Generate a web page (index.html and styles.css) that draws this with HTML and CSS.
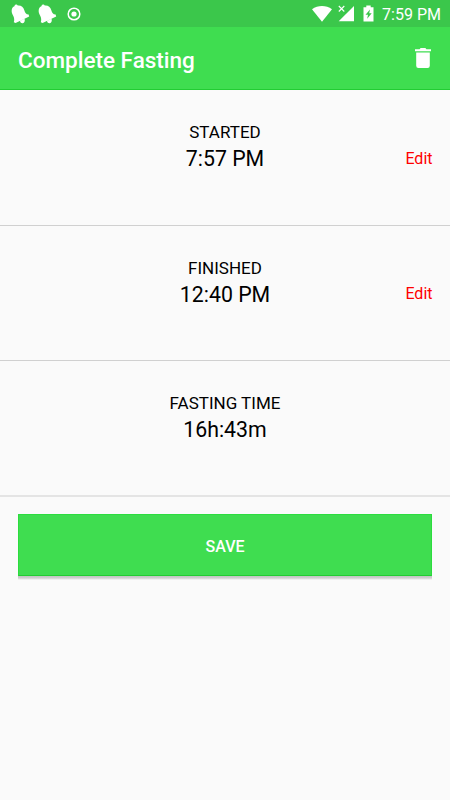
FILE: index.html
```html
<!DOCTYPE html>
<html lang="en">
<head>
    <meta charset="UTF-8">
    <meta name="viewport" content="width=device-width, initial-scale=1.0">
    <title>Complete Fasting</title>
    <link rel="stylesheet" href="styles.css">
</head>
<body>
    <div class="status-bar">
        <div class="notifications">
            <svg class="bell" viewBox="0 0 20 22"><path d="M.8 5.6 C1 4 2 2.6 3.4 2.2 L4 .8 L5.8 .6 L6.8 1.6 C10 1.2 12.4 3.2 13.4 6.4 C14 8.8 15 10 17.6 10.6 L18.2 12.6 L4.6 19 L2.8 18.2 C3.6 15.8 3.2 14 2.2 11.8 C.8 9.6 .4 7.6 .8 5.6Z M9 17 L13.6 14.8 C14.2 17.4 13.4 18.9 11.8 19.2 C10.4 19.4 9.4 18.6 9 17Z"/></svg>
            <svg class="bell" viewBox="0 0 20 22"><path d="M.8 5.6 C1 4 2 2.6 3.4 2.2 L4 .8 L5.8 .6 L6.8 1.6 C10 1.2 12.4 3.2 13.4 6.4 C14 8.8 15 10 17.6 10.6 L18.2 12.6 L4.6 19 L2.8 18.2 C3.6 15.8 3.2 14 2.2 11.8 C.8 9.6 .4 7.6 .8 5.6Z M9 17 L13.6 14.8 C14.2 17.4 13.4 18.9 11.8 19.2 C10.4 19.4 9.4 18.6 9 17Z"/></svg>
            <svg class="target" viewBox="0 0 14 14"><circle class="ring" cx="7" cy="7" r="5.8"/><circle cx="7" cy="7" r="2.6"/></svg>
        </div>
        <div class="system">
            <svg class="wifi" viewBox="0 0 20 16"><path d="M0 3.3 C6-1 14-1 20 3.3 L10 15.8Z"/></svg>
            <svg class="signal" viewBox="0 0 17 17"><path d="M16 1 V16.3 H.7Z"/><path class="gap" d="M0 0 H8 V8 H0Z"/><path class="cross" d="M.8 1 L6.3 6.5 M6.3 1 L.8 6.5"/></svg>
            <svg class="battery" viewBox="0 0 11 17"><path d="M3.3 .5 H7.7 V2.2 H10.5 V16.5 H.5 V2.2 H3.3Z"/><path class="bolt" d="M7 4.5 L2.5 9.8 H5 L4.2 13.8 L8.7 8.3 H6.2Z"/></svg>
            <span class="clock">7:59 PM</span>
        </div>
    </div>

    <header class="toolbar">
        <h1>Complete Fasting</h1>
        <svg class="trash" viewBox="0 0 16 20"><path d="M0 1.2 H4.6 L5.6 0 H10.4 L11.4 1.2 H16 V3.3 H0Z M1.2 4.6 H14.8 V17.8 Q14.8 20 12.6 20 H3.4 Q1.2 20 1.2 17.8Z"/></svg>
    </header>

    <main>
        <section class="entry">
            <div class="label">STARTED</div>
            <div class="value">7:57 PM</div>
            <a class="edit">Edit</a>
        </section>
        <section class="entry">
            <div class="label">FINISHED</div>
            <div class="value">12:40 PM</div>
            <a class="edit">Edit</a>
        </section>
        <section class="entry last">
            <div class="label">FASTING TIME</div>
            <div class="value">16h:43m</div>
        </section>
        <div class="actions">
            <button type="button" class="btn-save">SAVE</button>
        </div>
    </main>
</body>
</html>
```
FILE: styles.css
```css
body {
    margin: 0;
    font-family: Roboto, sans-serif;
    background-color: #fafafa;
    color: #000;
}
svg {
    display: block;
    fill: #fff;
}
.status-bar {
    display: flex;
    justify-content: space-between;
    height: 27px;
    box-sizing: border-box;
    padding: 0 9px 0 11px;
    background-color: #3bc74b;
}
.notifications,
.system {
    display: flex;
    align-items: center;
}
.bell {
    width: 20px;
    height: 22px;
    margin: 2px 7px 0 0;
}
.target {
    width: 14px;
    height: 14px;
    margin-left: 2px;
}
.target .ring {
    fill: none;
    stroke: #fff;
    stroke-width: 1.5;
}
.wifi {
    width: 20px;
    height: 16px;
    margin-right: 6px;
}
.signal {
    width: 17px;
    height: 17px;
    margin-right: 8px;
}
.signal .gap {
    fill: #3bc74b;
}
.signal .cross {
    fill: none;
    stroke: #fff;
    stroke-width: 1.1;
}
.battery {
    width: 11px;
    height: 17px;
    margin-right: 8px;
}
.battery .bolt {
    fill: #3bc74b;
}
.clock {
    color: #fff;
    font-size: 16px;
    line-height: 27px;
    padding-top: 1px;
}
.toolbar {
    display: flex;
    align-items: center;
    justify-content: space-between;
    height: 63px;
    box-sizing: border-box;
    padding: 0 19px 0 18px;
    background-color: #3fdd50;
    border-bottom: 1px solid #22cc33;
}
.toolbar h1 {
    margin: 3px 0 0;
    color: #fff;
    font-size: 22.5px;
    font-weight: 500;
    line-height: 28px;
}
.trash {
    width: 16px;
    height: 20px;
}
.entry {
    display: grid;
    grid-template-columns: 1fr auto 1fr;
    grid-template-rows: 20px 32px;
    align-items: center;
    height: 135.5px;
    box-sizing: border-box;
    padding: 32px 17.5px 0;
    border-bottom: 1px solid #d0d0d0;
}
.entry.last {
    border-bottom: 2px solid #e4e4e4;
}
.label {
    grid-column: 2;
    text-align: center;
    font-size: 17px;
    line-height: 20px;
}
.value {
    grid-column: 2;
    text-align: center;
    font-size: 21.3px;
    line-height: 32px;
    padding-top: 2px;
}
.edit {
    grid-column: 3;
    justify-self: end;
    color: #f00;
    font-size: 16px;
}
.actions {
    padding: 17.5px 18px 0;
}
.actions::after {
    content: "";
    display: block;
    height: 4px;
    background: linear-gradient(#c2c2c2, #cfcfcf 50%, #fafafa);
}
.btn-save {
    display: block;
    width: 100%;
    height: 62px;
    padding: 2px 0 0;
    border: 1px solid #2bdd3e;
    border-bottom-color: #22cc33;
    background-color: #3fdd50;
    color: #fff;
    font-family: inherit;
    font-size: 16px;
    font-weight: 500;
}
```
